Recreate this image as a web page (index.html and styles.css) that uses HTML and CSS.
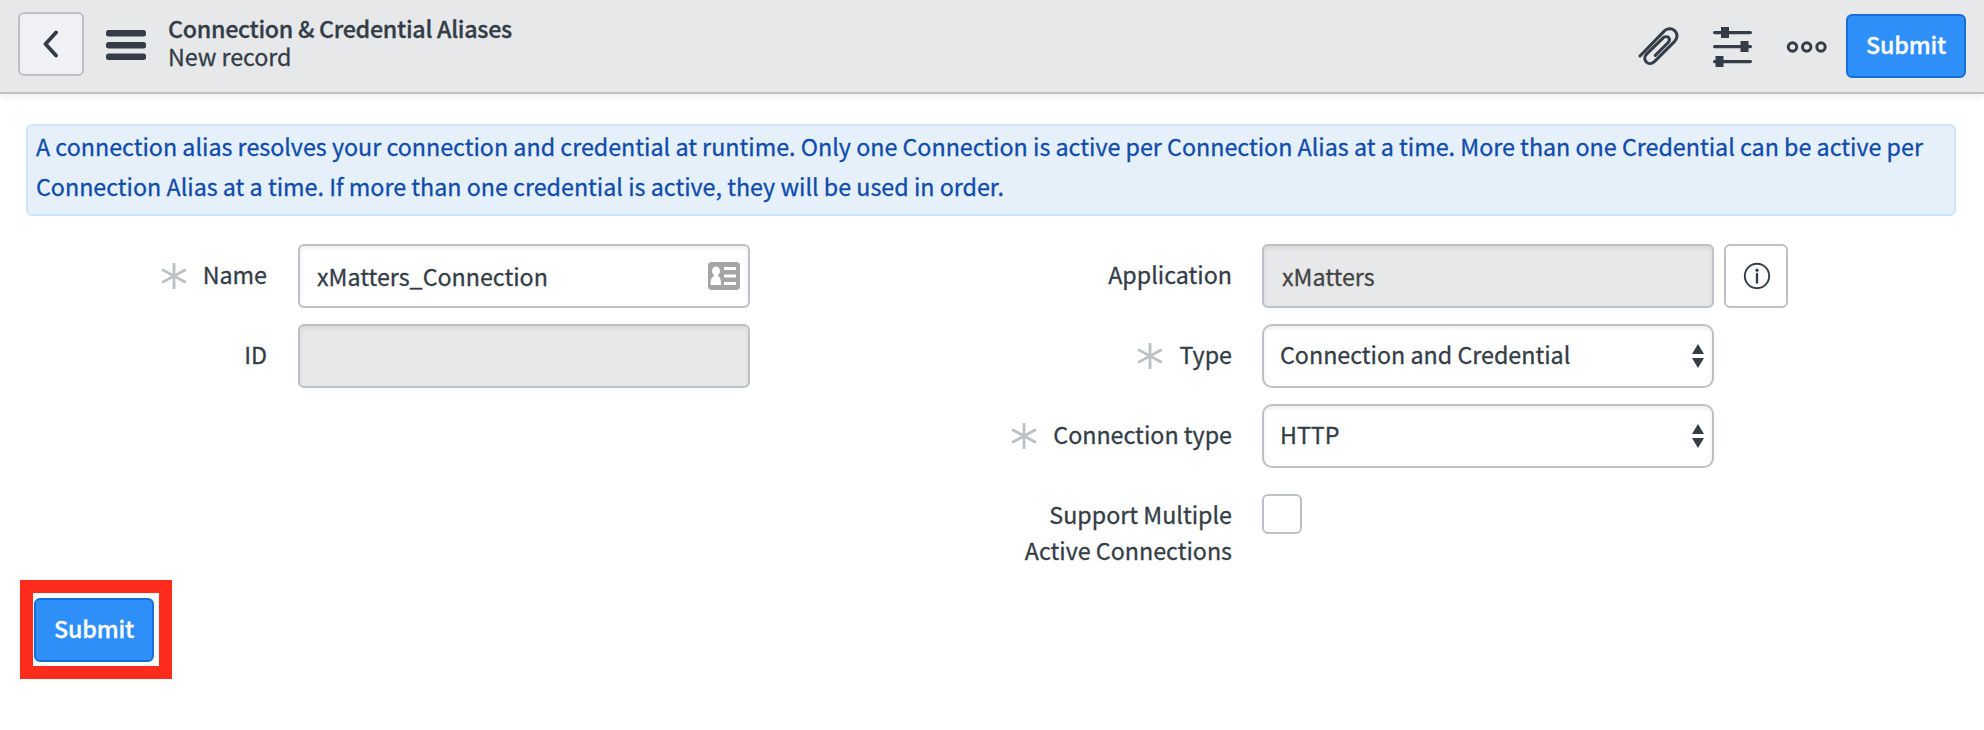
FILE: index.html
```html
<!DOCTYPE html>
<html lang="en">
<head>
<meta charset="utf-8">
<title>Connection &amp; Credential Aliases</title>
<link rel="stylesheet" href="styles.css">
</head>
<body>
<header class="header">
  <button class="btn back" aria-label="Back"><svg width="16" height="28" viewBox="0 0 16 28"><path d="M13 2.500 2.500 14 13 25.500" fill="none" stroke="currentColor" stroke-width="3.800" stroke-linecap="round" stroke-linejoin="round"/></svg></button>
  <svg class="menu" width="40" height="32" viewBox="0 0 40 32"><g fill="currentColor"><rect y="1" width="40" height="6.500" rx="2.500"/><rect y="13" width="40" height="6.500" rx="2.500"/><rect y="24.500" width="40" height="6.500" rx="2.500"/></g></svg>
  <div class="heading"><h1 class="title">Connection &amp; Credential Aliases</h1><div class="subtitle">New record</div></div>
  <div class="actions">
    <svg class="clip" width="42" height="40" viewBox="0 0 126 120"><path d="M6 90 78 16C86 7 100 6 109 13C120 22 119 37 110 46L50 106C42 114 32 115 25 108C18 101 19 91 27 83L74 37C80 31 88 31 92 35C96 40 94 46 89 51L52 88" fill="none" stroke="currentColor" stroke-width="9" stroke-linecap="round" stroke-linejoin="round"/></svg>
    <svg class="sliders" width="40" height="42" viewBox="0 0 40 42"><g fill="currentColor"><rect y="4" width="39" height="3.200" rx="1.600"/><rect y="18" width="39" height="3.200" rx="1.600"/><rect y="33" width="39" height="3.200" rx="1.600"/><rect x="8" y="0" width="8" height="11"/><rect x="27.500" y="14" width="8" height="11"/><rect x="2.500" y="29" width="8" height="11"/></g></svg>
    <svg class="more" width="42" height="14" viewBox="0 0 42 14"><g fill="none" stroke="currentColor" stroke-width="3"><circle cx="6.500" cy="7" r="4.200"/><circle cx="20.700" cy="7" r="4.200"/><circle cx="35" cy="7" r="4.200"/></g></svg>
    <button class="btn primary">Submit</button>
  </div>
</header>
<main class="content">
  <div class="alert">A connection alias resolves your connection and credential at runtime. Only one Connection is active per Connection Alias at a time. More than one Credential can be active per Connection Alias at a time. If more than one credential is active, they will be used in order.</div>
  <form class="form">
    <div class="column left">
      <div class="row">
        <div class="label"><svg class="star" width="26" height="26" viewBox="0 0 26 26"><path d="M13 0V26M1 6.500 25 19.500M25 6.500 1 19.500" stroke="currentColor" stroke-width="2.800"/></svg><span>Name</span></div>
        <div class="field"><span>xMatters_Connection</span><svg class="card" width="32" height="28" viewBox="0 0 32 28"><rect width="32" height="28" rx="4" fill="#a5a5a5"/><g fill="#fff"><ellipse cx="8" cy="9" rx="4" ry="4.500"/><path d="M2.500 23C2.500 17 4 15 6 14V11H10V14C12 15 13 17 13 23Z"/><rect x="16" y="5" width="12" height="3"/><rect x="16" y="12.500" width="12" height="3"/><rect x="16" y="20" width="12" height="3"/></g></svg></div>
      </div>
      <div class="row"><div class="label"><span>ID</span></div><div class="field readonly"></div></div>
    </div>
    <div class="column right">
      <div class="row">
        <div class="label"><span>Application</span></div>
        <div class="field readonly"><span>xMatters</span></div>
        <button type="button" class="btn info" aria-label="Info"><svg width="28" height="28" viewBox="0 0 28 28"><circle cx="14" cy="14" r="12.200" fill="none" stroke="currentColor" stroke-width="1.900"/><circle cx="14" cy="8.200" r="1.600" fill="currentColor"/><path d="M14 12V20.500" stroke="currentColor" stroke-width="2.400" stroke-linecap="round"/></svg></button>
      </div>
      <div class="row">
        <div class="label"><svg class="star" width="26" height="26" viewBox="0 0 26 26"><path d="M13 0V26M1 6.500 25 19.500M25 6.500 1 19.500" stroke="currentColor" stroke-width="2.800"/></svg><span>Type</span></div>
        <div class="field select"><span>Connection and Credential</span><svg class="arrows" width="12" height="24" viewBox="0 0 12 24"><path d="M6 0 12 10H0ZM0 14H12L6 24Z" fill="currentColor"/></svg></div>
      </div>
      <div class="row">
        <div class="label"><svg class="star" width="26" height="26" viewBox="0 0 26 26"><path d="M13 0V26M1 6.500 25 19.500M25 6.500 1 19.500" stroke="currentColor" stroke-width="2.800"/></svg><span>Connection type</span></div>
        <div class="field select"><span>HTTP</span><svg class="arrows" width="12" height="24" viewBox="0 0 12 24"><path d="M6 0 12 10H0ZM0 14H12L6 24Z" fill="currentColor"/></svg></div>
      </div>
      <div class="row">
        <div class="label"><span>Support Multiple<br>Active Connections</span></div>
        <div class="checkbox"></div>
      </div>
    </div>
  </form>
  <div class="highlight"><button class="btn primary">Submit</button></div>
</main>
</body>
</html>
```
FILE: styles.css
```css
* { box-sizing: border-box; }
body {
  margin: 0;
  background: #fff;
  color: #343d47;
  font: 400 23.28px/36px "Noto Sans CJK SC", "Open Sans", sans-serif;
  -webkit-text-stroke: .3px currentColor;
}
svg { display: block; flex: none; }
.header {
  display: flex;
  align-items: flex-start;
  height: 94px;
  padding: 12px 18px;
  background: #e6e8ea;
  border-bottom: 2px solid #bdc0c4;
  box-shadow: 0 2px 6px rgba(0, 0, 0, .08);
}
.btn {
  display: flex;
  align-items: center;
  justify-content: center;
  height: 64px;
  padding: 0;
  border: 2px solid #bdc0c4;
  border-radius: 6px;
  background: #fff;
  color: #343d47;
  font: inherit;
}
.back { width: 66px; background: #f0f1f4; }
.menu { margin: 17px 0 0 22px; }
.heading { margin: 2px 0 0 22px; line-height: 28px; }
.title { margin: 0; font-size: inherit; font-weight: 500; letter-spacing: -.3px; }
.subtitle { letter-spacing: -.06px; }
.actions { display: flex; margin: 2px 0 0 auto; }
.clip { margin-top: 12px; }
.sliders { margin: 13px 0 0 33px; }
.more { margin: 26px 18px 0 33px; }
.primary {
  width: 120px;
  background: #2f8ff9;
  border-color: #156fd6;
  color: #fff;
  font-weight: 500;
  letter-spacing: -.15px;
  padding-bottom: 4px;
}
.content { padding: 30px 28px 0 26px; }
.alert {
  height: 92px;
  padding: 0 8px;
  border: 2px solid #cfe4fa;
  border-radius: 6px;
  background: #e5f0fa;
  color: #0f4cab;
  line-height: 40px;
}
.form { display: flex; height: 364px; padding-top: 28px; }
.column { display: flex; flex-direction: column; gap: 16px; }
.left { width: 724px; }
.right { width: 1038px; }
.row { display: flex; }
.left .label { width: 241px; margin-right: 31px; }
.right .label { width: 482px; margin-right: 30px; }
.label {
  display: flex;
  justify-content: flex-end;
  padding-top: 12px;
  text-align: right;
}
.star { margin: 7px 16px 0 0; color: #bdc0c4; }
.field {
  display: flex;
  align-items: center;
  justify-content: space-between;
  width: 452px;
  height: 64px;
  padding: 0 8px 0 17px;
  border: 2px solid #bdc0c4;
  border-radius: 6px;
  box-shadow: inset 0 2px 4px rgba(0, 0, 0, .08);
}
.readonly { padding-left: 18px; background: #e6e8ea; color: #444; }
.select { border-radius: 10px; padding-left: 16px; }
.select span { margin-bottom: 4px; }
.info { width: 64px; margin-left: 10px; padding-left: 2px; }
.checkbox {
  width: 40px;
  height: 40px;
  margin-top: 10px;
  border: 2px solid #bdc0c4;
  border-radius: 6px;
}
.highlight {
  width: 152px;
  height: 99px;
  margin-left: -6px;
  padding: 5px 1px;
  border: 13px solid #ff2b1d;
}
```
